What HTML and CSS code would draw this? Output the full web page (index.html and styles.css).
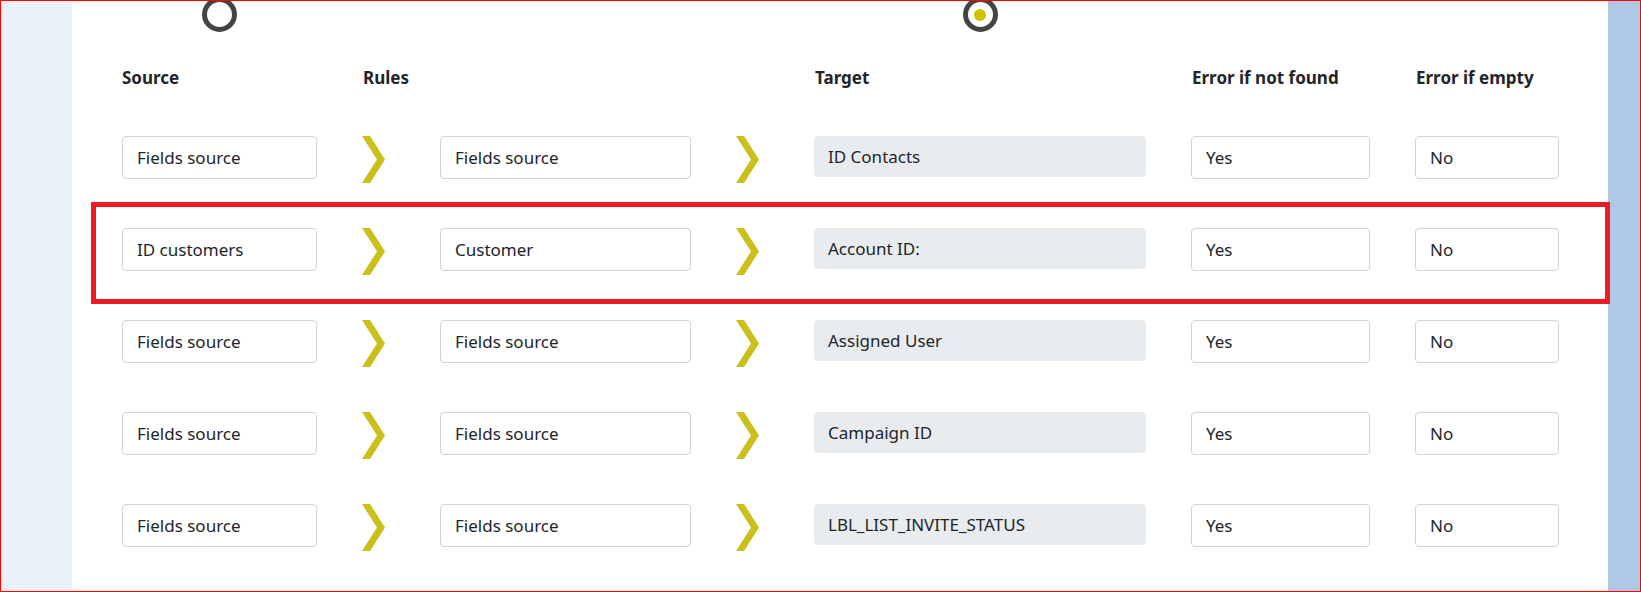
FILE: index.html
```html
<!DOCTYPE html>
<html lang="en">
<head>
<meta charset="utf-8">
<title>Field mapping</title>
<link rel="stylesheet" href="styles.css">
</head>
<body>
<div class="frame">
  <aside class="side-left"></aside>
  <main class="main">
    <div class="row steps">
      <div class="step c-source"><span class="ring"></span></div>
      <div class="step c-target"><span class="ring"><span class="dot"></span></span></div>
    </div>

    <div class="row heads">
      <div class="head c-source">Source</div>
      <div class="head c-rules">Rules</div>
      <div class="head c-target">Target</div>
      <div class="head c-yes">Error if not found</div>
      <div class="head c-no">Error if empty</div>
    </div>

    <div class="rows">
      <div class="row map">
        <div class="field">Fields source</div>
        <svg class="chev" viewBox="0 0 23 47" width="23" height="47"><polygon points="0,0 8,0 23,23.5 8,47 0,47 15,23.5"/></svg>
        <div class="field">Fields source</div>
        <svg class="chev" viewBox="0 0 23 47" width="23" height="47"><polygon points="0,0 8,0 23,23.5 8,47 0,47 15,23.5"/></svg>
        <div class="target">ID Contacts</div>
        <div class="field">Yes</div>
        <div class="field">No</div>
      </div>

      <div class="row map">
        <div class="field">ID customers</div>
        <svg class="chev" viewBox="0 0 23 47" width="23" height="47"><polygon points="0,0 8,0 23,23.5 8,47 0,47 15,23.5"/></svg>
        <div class="field">Customer</div>
        <svg class="chev" viewBox="0 0 23 47" width="23" height="47"><polygon points="0,0 8,0 23,23.5 8,47 0,47 15,23.5"/></svg>
        <div class="target">Account ID:</div>
        <div class="field">Yes</div>
        <div class="field">No</div>
      </div>

      <div class="row map">
        <div class="field">Fields source</div>
        <svg class="chev" viewBox="0 0 23 47" width="23" height="47"><polygon points="0,0 8,0 23,23.5 8,47 0,47 15,23.5"/></svg>
        <div class="field">Fields source</div>
        <svg class="chev" viewBox="0 0 23 47" width="23" height="47"><polygon points="0,0 8,0 23,23.5 8,47 0,47 15,23.5"/></svg>
        <div class="target">Assigned User</div>
        <div class="field">Yes</div>
        <div class="field">No</div>
      </div>

      <div class="row map">
        <div class="field">Fields source</div>
        <svg class="chev" viewBox="0 0 23 47" width="23" height="47"><polygon points="0,0 8,0 23,23.5 8,47 0,47 15,23.5"/></svg>
        <div class="field">Fields source</div>
        <svg class="chev" viewBox="0 0 23 47" width="23" height="47"><polygon points="0,0 8,0 23,23.5 8,47 0,47 15,23.5"/></svg>
        <div class="target">Campaign ID</div>
        <div class="field">Yes</div>
        <div class="field">No</div>
      </div>

      <div class="row map">
        <div class="field">Fields source</div>
        <svg class="chev" viewBox="0 0 23 47" width="23" height="47"><polygon points="0,0 8,0 23,23.5 8,47 0,47 15,23.5"/></svg>
        <div class="field">Fields source</div>
        <svg class="chev" viewBox="0 0 23 47" width="23" height="47"><polygon points="0,0 8,0 23,23.5 8,47 0,47 15,23.5"/></svg>
        <div class="target">LBL_LIST_INVITE_STATUS</div>
        <div class="field">Yes</div>
        <div class="field">No</div>
      </div>
    </div>
  </main>
  <aside class="side-right"></aside>
  <div class="highlight"></div>
</div>
</body>
</html>
```

FILE: styles.css
```css
* { box-sizing: border-box; }

html, body {
  margin: 0;
  padding: 0;
  background: #ffffff;
}

body {
  font-family: "Noto Sans", "Open Sans", "Liberation Sans", sans-serif;
  font-size: 17px;
  color: #212529;
}

.frame {
  position: relative;
  display: flex;
  width: 1641px;
  height: 592px;
  border: 1px solid #ff0000;
  overflow: hidden;
}

.side-left {
  width: 71px;
  flex: none;
  background: #eaf1f9;
}

.side-right {
  width: 32px;
  flex: none;
  background: #adc9e5;
}

.main {
  flex: 1;
  background: #ffffff;
  overflow: hidden;
  padding-left: 50px;
}

.row {
  display: grid;
  grid-template-columns: 195px 33px 251px 33px 332px 179px 144px;
  column-gap: 45px;
}

.c-source { grid-column: 1; }
.c-rules { grid-column: 2 / span 2; }
.c-target { grid-column: 5; }
.c-yes { grid-column: 6; }
.c-no { grid-column: 7; }

/* stepper circles (page is scrolled, so they are cut at the top) */
.steps {
  margin-top: -4px;
  height: 35px;
}

.step {
  display: flex;
  justify-content: center;
}

.ring {
  width: 35px;
  height: 35px;
  border: 5.5px solid #444444;
  border-radius: 50%;
  display: flex;
  align-items: center;
  justify-content: center;
  background: #ffffff;
}

.dot {
  width: 12px;
  height: 12px;
  border-radius: 50%;
  background: #cfc100;
}

/* headers */
.heads {
  margin-top: 34px;
}

.head {
  font-weight: 700;
  font-size: 17px;
  line-height: 24px;
  white-space: nowrap;
  padding-left: 1px;
}
.head.c-source { padding-left: 0; }

/* mapping rows */
.rows {
  display: flex;
  flex-direction: column;
  gap: 49px;
  margin-top: 46px;
}

.map {
  height: 43px;
  align-items: start;
}

.field {
  height: 43px;
  border: 1px solid #ced4da;
  border-radius: 4px;
  background: #ffffff;
  padding-left: 14px;
  display: flex;
  align-items: center;
  white-space: nowrap;
  line-height: 24px;
}

.target {
  height: 41px;
  border-radius: 4px;
  background: #e9ecef;
  padding-left: 14px;
  display: flex;
  align-items: center;
  white-space: nowrap;
  line-height: 24px;
}

.chev {
  display: block;
  fill: #c9c01c;
}

.highlight {
  position: absolute;
  left: 90px;
  top: 201px;
  width: 1519px;
  height: 102px;
  border: 5px solid #ed1c24;
  pointer-events: none;
}
```
